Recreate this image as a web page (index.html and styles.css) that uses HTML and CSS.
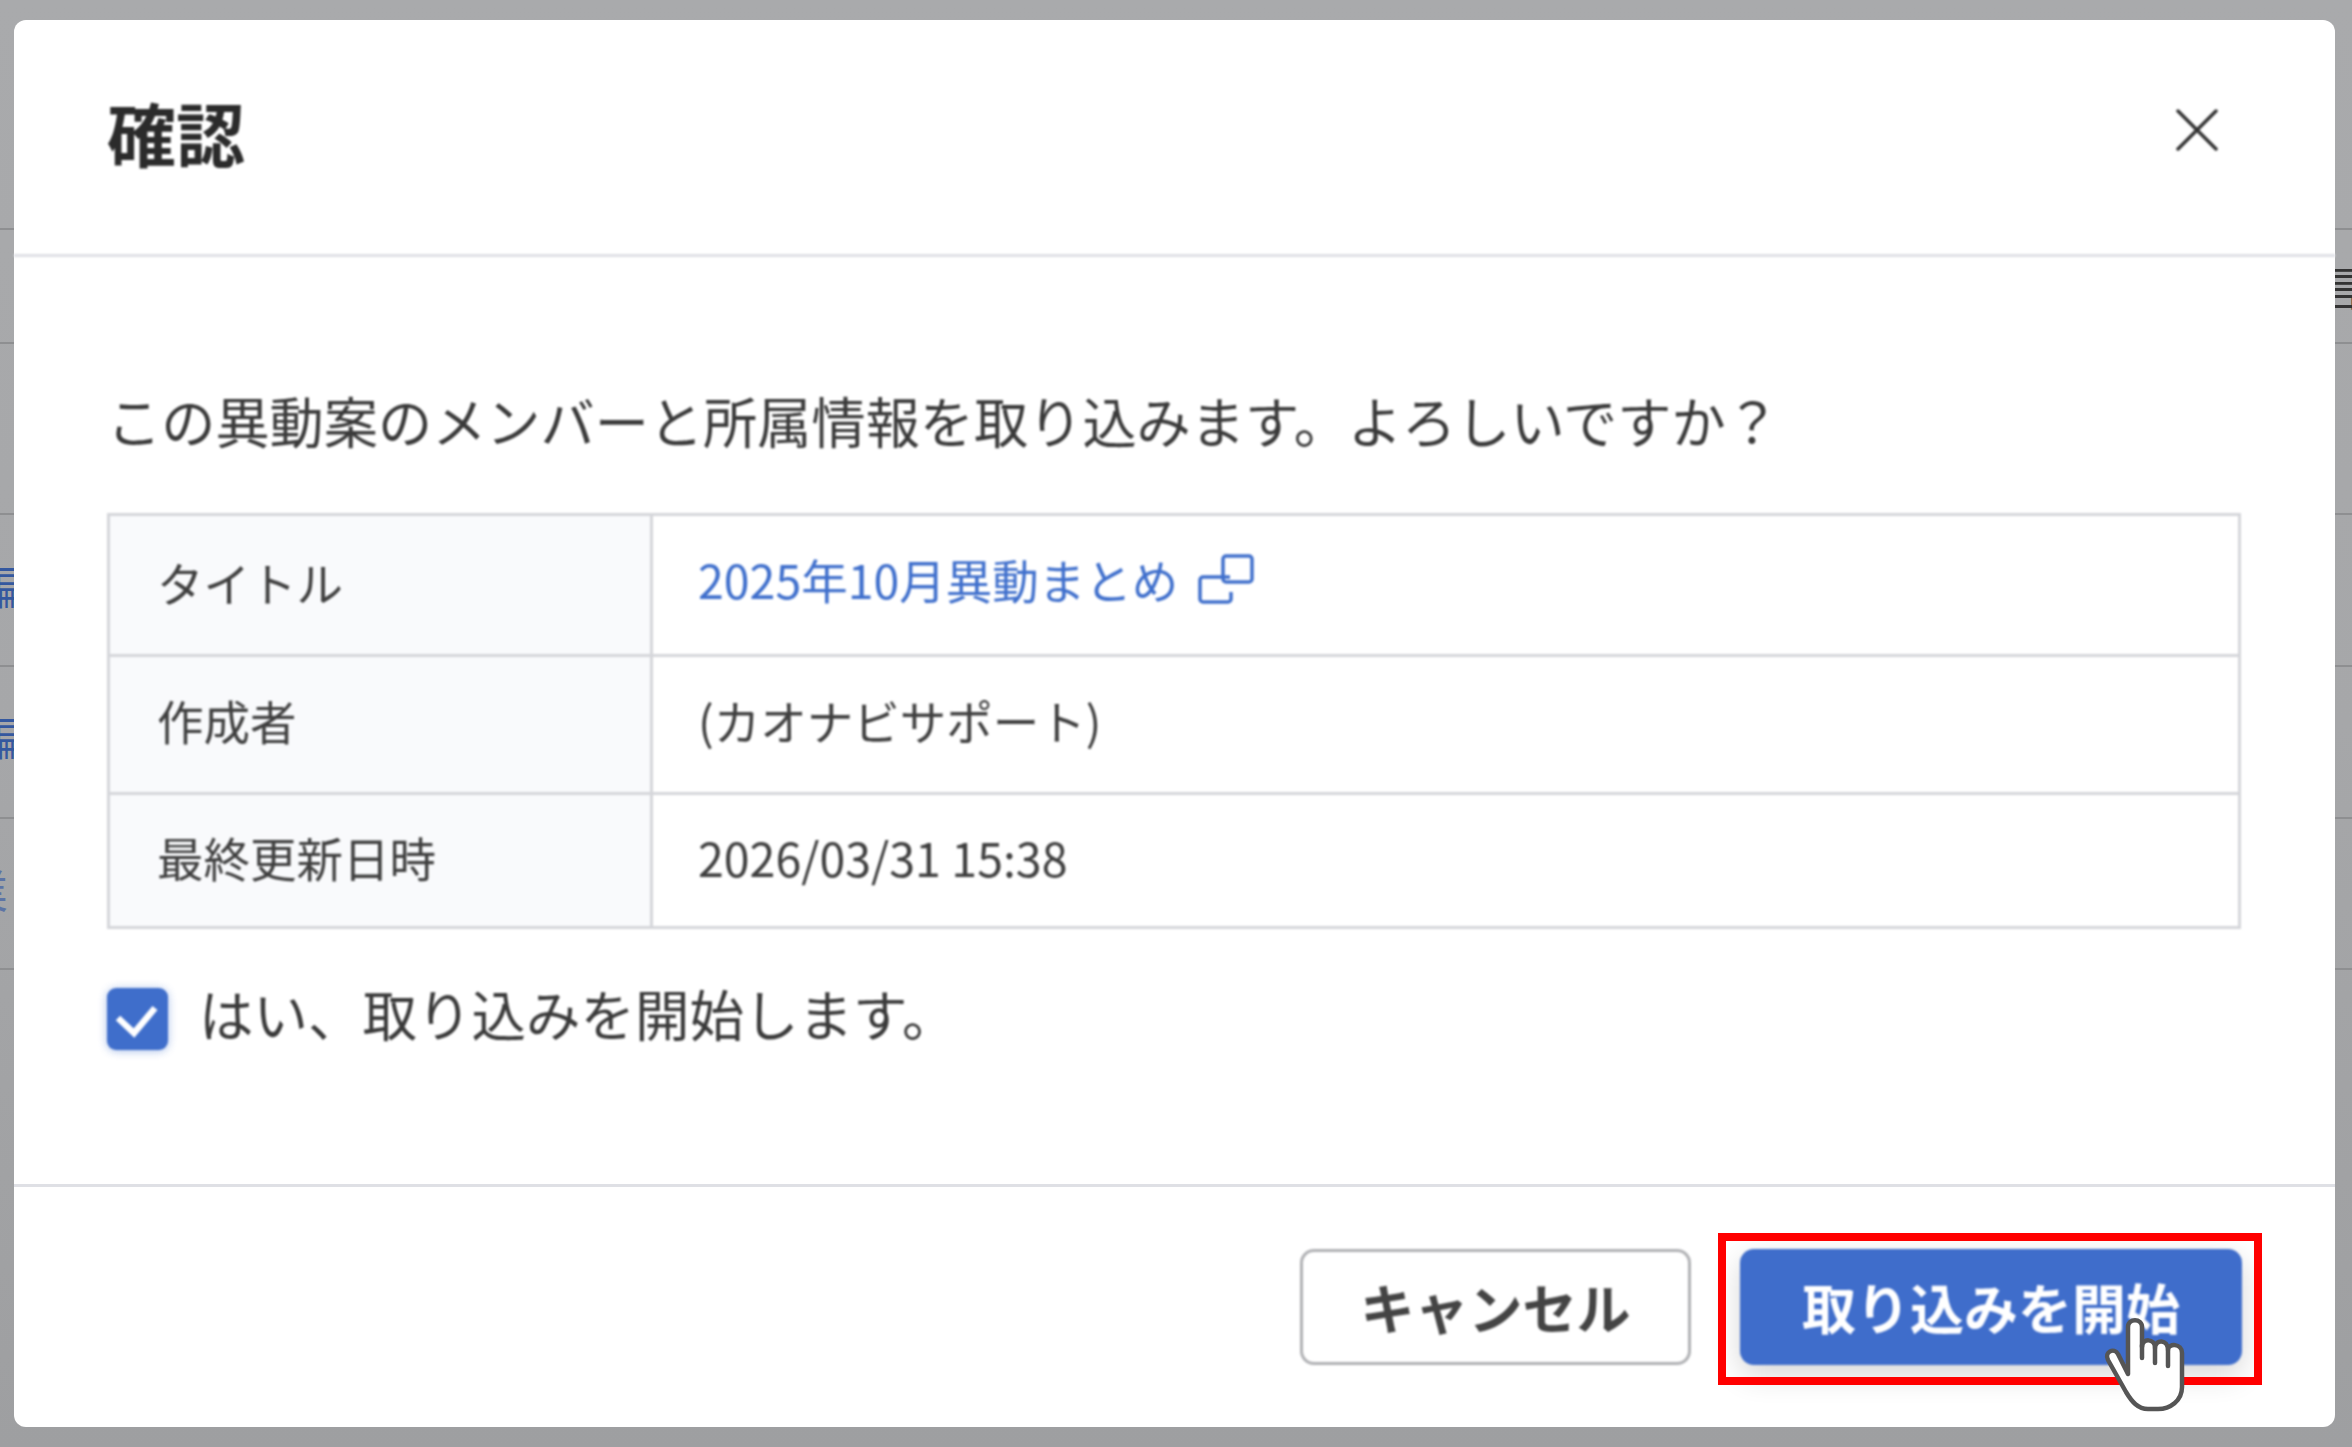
FILE: index.html
```html
<!DOCTYPE html>
<html lang="ja">
<head>
<meta charset="utf-8">
<title>確認</title>
<link rel="stylesheet" href="styles.css">
</head>
<body>
<div class="backdrop" aria-hidden="true">
  <i class="rule r1"></i><i class="rule r2"></i><i class="rule r3"></i><i class="rule r4"></i><i class="rule r5"></i><i class="rule r6"></i>
  <span class="peek g1">編</span><span class="peek g2">編</span><span class="peek g3">業</span><span class="peek g4">言</span>
</div>
<main class="dialog">
  <header class="dialog-head">
    <h1 class="dialog-title">確認</h1>
    <svg class="close" viewBox="0 0 42 42" aria-label="閉じる"><path d="M2 2 40 40M40 2 2 40"/></svg>
  </header>
  <section class="dialog-body">
    <p class="intro">この異動案のメンバーと所属情報を取り込みます。よろしいですか？</p>
    <table class="info">
      <tr class="row-a">
        <th><span class="cell-text">タイトル</span></th>
        <td><a class="link">2025年10月異動まとめ<svg class="ext" viewBox="0 0 56 50"><path d="M32 23H5a3 3 0 0 0-3 3v19a3 3 0 0 0 3 3h25a3 3 0 0 0 3-3v-7"/><rect x="25" y="2" width="29" height="26" rx="3"/></svg></a></td>
      </tr>
      <tr class="row-b">
        <th><span class="cell-text b">作成者</span></th>
        <td><span class="cell-text b">(カオナビサポート)</span></td>
      </tr>
      <tr class="row-c">
        <th><span class="cell-text">最終更新日時</span></th>
        <td><span class="cell-text">2026/03/31 15:38</span></td>
      </tr>
    </table>
    <label class="confirm">
      <span class="box"><svg viewBox="0 0 61 62"><path d="M11 30 27 45 48 20"/></svg></span>
      <span class="confirm-text">はい、取り込みを開始します。</span>
    </label>
  </section>
  <footer class="dialog-foot">
    <button class="btn btn-cancel">キャンセル</button>
    <div class="primary-wrap">
      <button class="btn btn-primary">取り込みを開始</button>
      <span class="callout"></span>
      <svg class="hand" viewBox="0 0 82 96"><path class="hand-fill" d="M24 57V10C24 1 38 1 38 10V30C38 21 51 21 51 31C51 22 64 22 64 33C64 26 78 26 78 36V70C78 84 66 92 54 92H44C34 92 28 85 22 75L4 43C0 35 10 30 14 37Z"/><path class="hand-line" d="M38 28V41M51 31V46M64 33V49"/></svg>
    </div>
  </footer>
</main>
</body>
</html>
```
FILE: styles.css
```css
* { box-sizing: border-box; }
html, body { height: 100%; }
body {
  margin: 0;
  height: 1447px;
  overflow: hidden;
  position: relative;
  background: linear-gradient(#a9aaac, #a6a7a9 50%, #9e9fa1);
  font-family: "Noto Sans CJK JP", "Noto Sans", sans-serif;
  color: #333;
  padding: 20px 17px 20px 14px;
}
.backdrop { position: absolute; inset: 0; overflow: hidden; }
.rule { position: absolute; left: 0; right: 0; height: 2px; background: #8e8f91; }
.r1 { top: 228px; } .r2 { top: 342px; } .r3 { top: 513px; }
.r4 { top: 665px; } .r5 { top: 817px; } .r6 { top: 968px; }
.peek { position: absolute; font-size: 46px; line-height: 50px; }
.g1 { left: -23px; top: 559px; color: #34589f; }
.g2 { left: -23px; top: 710px; color: #34589f; }
.g3 { left: -38px; top: 863px; color: #5c74a5; }
.g4 { left: 2318px; top: 260px; color: #333; }

.dialog {
  position: relative;
  height: 100%;
  background: #fff;
  border-radius: 12px;
  display: flex;
  flex-direction: column;
}
.dialog-head {
  height: 237px;
  flex: none;
  border-bottom: 3px solid #dfe0e5;
  padding: 0 117px 0 93px;
  display: flex;
  align-items: center;
  justify-content: space-between;
  filter: blur(0.8px);
}
.dialog-title { margin: 0 0 9px; font-size: 69px; font-weight: 700; line-height: 1; color: #2b2b2b; }
.close { width: 42px; height: 42px; margin: 0 0 14px; }
.close path { fill: none; stroke: #333; stroke-width: 3.5; stroke-linecap: round; }

.dialog-body { flex: 1; padding: 0 94px 0 93px; display: flex; flex-direction: column; filter: blur(0.8px); }
.intro { margin: 0; height: 256px; display: flex; align-items: center; padding-top: 71px; font-size: 54.2px; line-height: 1; white-space: nowrap; color: #3a3a3a; }

.info { width: 2134px; border-collapse: collapse; font-size: 46.5px; table-layout: fixed; }
.info th, .info td { border: 3px solid #d5d6da; padding: 0 0 0 45px; text-align: left; font-weight: 400; color: #3f3f3f; }
.info th { width: 543px; background: #f9fafc; padding-left: 47px; }
.cell-text { position: relative; top: -4px; }
.cell-text.b { top: -5px; }
.row-a { height: 141px; } .row-b { height: 138px; } .row-c { height: 134px; }
.link { color: #3f6fcc; display: inline-flex; align-items: center; gap: 20px; position: relative; top: -7px; }
.ext { width: 56px; height: 50px; margin-top: 1px; }
.ext path, .ext rect { fill: none; stroke: #3f6fcc; stroke-width: 3.5; }

.confirm { display: flex; align-items: center; gap: 33px; margin-top: 59px; font-size: 54.5px; line-height: 62px; color: #3a3a3a; }
.confirm-text { position: relative; top: -6px; left: -2px; }
.box { width: 61px; height: 62px; background: #3f6ecb; border-radius: 9px; box-shadow: 0 1px 8px rgba(63,110,203,.45); flex: none; }
.box svg { display: block; width: 100%; height: 100%; }
.box path { fill: none; stroke: #fff; stroke-width: 6.5; }

.dialog-foot {
  height: 243px;
  flex: none;
  border-top: 3px solid #dfe0e5;
  padding: 62px 93px 0 0;
  display: flex;
  justify-content: flex-end;
  align-items: flex-start;
  gap: 49px;
}
.btn { height: 116px; font: 700 54px/1 "Noto Sans CJK JP", sans-serif; border-radius: 14px; padding: 0; filter: blur(0.8px); }
.btn-cancel { width: 391px; background: #fff; border: 3px solid #b0b1b4; color: #444; }
.btn-primary { width: 502px; background: #3f6dcb; border: 0; color: #fff; box-shadow: 0 10px 30px rgba(0,0,0,.16); display: block; }
.primary-wrap { position: relative; }
.callout { position: absolute; left: -22px; right: -20px; top: -16px; bottom: -20px; border: 8px solid #f00; }
.hand { position: absolute; left: 364px; top: 68px; width: 82px; height: 96px; }
.hand-fill { fill: #fff; stroke: #555; stroke-width: 4.5; stroke-linejoin: round; }
.hand-line { fill: none; stroke: #555; stroke-width: 4.5; stroke-linecap: round; }
```
